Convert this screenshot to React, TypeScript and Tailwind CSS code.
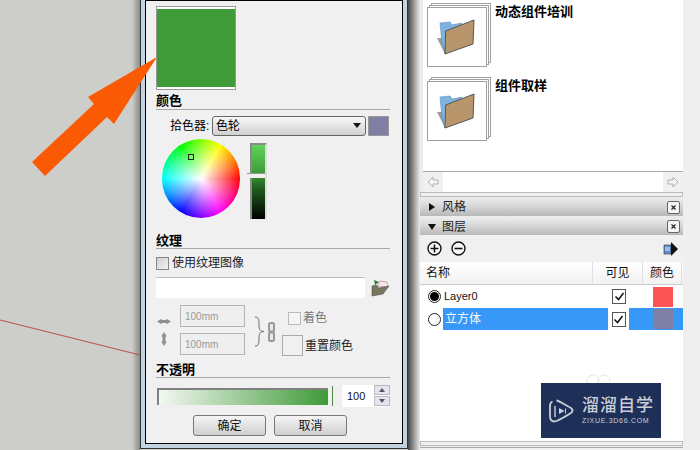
const cjk = "font-['Liberation_Sans','Noto_Sans_CJK_SC',sans-serif]";

function SectionTitle({ label, className = "" }: { label: string; className?: string }) {
  return (
    <div className={`border-b border-[#a8a8a8] text-[13px] leading-[15px] font-bold text-black ${className}`}>
      {label}
    </div>
  );
}

function Folder() {
  return (
    <svg width="40" height="40" viewBox="0 0 40 40">
      <path d="M1 21 L9 37 L9 21 Z" fill="#9c9c9c" />
      <path d="M4 6 L14 5 L16 8 L26 6 L9 37 L6 26 Z" fill="#7db3de" stroke="#5f8db5" strokeWidth="0.6" />
      <path d="M9.7 14 L38 3 L37 27 L9 37 Z" fill="#b8956a" stroke="#565656" strokeWidth="1" />
    </svg>
  );
}

function Thumb({ label }: { label: string }) {
  return (
    <div className="flex gap-1 h-[74px]">
      <div className="relative w-[64px] h-[64px] shrink-0">
        <div className="absolute left-[4px] top-0 w-[60px] h-[60px] border border-[#a0a0a0] bg-white" />
        <div className="absolute left-[2px] top-[2px] w-[60px] h-[60px] border border-[#a0a0a0] bg-white" />
        <div className="absolute left-0 top-[4px] w-[60px] h-[60px] border border-[#a0a0a0] bg-white pl-[8px] pt-[9px]">
          <Folder />
        </div>
      </div>
      <div className="text-[13px] leading-[16px] font-bold text-black mt-[1px]">{label}</div>
    </div>
  );
}

function PanelBar({ label, open, className = "h-[18px]" }: { label: string; open?: boolean; className?: string }) {
  return (
    <div className={`flex items-center shrink-0 bg-gradient-to-b from-[#ececec] via-[#d4d4d4] to-[#b8b8b8] pl-[8px] pr-[3px] text-[12px] text-[#222] ${className}`}>
      <svg width="8" height="8" viewBox="0 0 8 8" className="mr-[6px]">
        {open ? <path d="M0 1 H8 L4 7 Z" fill="#111" /> : <path d="M1 0 V8 L7 4 Z" fill="#111" />}
      </svg>
      <span className="flex-1">{label}</span>
      <span className="w-[13px] h-[13px] border border-[#666] rounded-[2px] bg-[#f4f4f4] flex items-center justify-center">
        <svg width="7" height="7" viewBox="0 0 7 7"><path d="M1.5 1.5 L5.5 5.5 M5.5 1.5 L1.5 5.5" stroke="#222" strokeWidth="1.2" /></svg>
      </span>
    </div>
  );
}

function LayerCheck() {
  return (
    <span className="w-[14px] h-[15px] border border-[#555] bg-white flex items-center justify-center shrink-0">
      <svg width="11" height="11" viewBox="0 0 11 11"><path d="M1.5 5.5 L4.5 8.5 L9.5 2" fill="none" stroke="#111" strokeWidth="1.5" /></svg>
    </span>
  );
}

function Button({ label }: { label: string }) {
  return (
    <div className="w-[73px] h-[21px] rounded-[3px] border border-[#777] bg-gradient-to-b from-[#f6f6f6] to-[#cfcfcf] flex items-center justify-center text-[12px] text-[#111]">
      {label}
    </div>
  );
}

function TexSize() {
  return (
    <div className="w-[65px] h-[22px] border border-[#b4b4b4] bg-[#efefef] flex items-center pl-[4px] text-[10px] text-[#999]">
      100mm
    </div>
  );
}

function ColorDialog() {
  return (
    <div className="w-[268px] h-[450px] shrink-0">
      <div className="h-[449px] border-x border-b border-[#333] bg-[#c3d3e0] px-[4px] pb-[4px]">
        <div className="h-full border-x border-y border-black bg-[#f0f0f0] pl-[10px] pr-[12px]">
          <div className="mt-[5px] w-[80px] h-[84px] border border-[#999] bg-white py-[2px]">
            <div className="h-full bg-[#3f9a38]" />
          </div>
          <SectionTitle label="颜色" className="mt-[3px] pb-[1px]" />
          <div className="mt-[5px] flex items-center h-[21px] text-[12px] text-black">
            <span className="ml-[14px] w-[42px]">拾色器:</span>
            <div className="w-[154px] h-[20px] rounded-[3px] border border-[#666] bg-gradient-to-b from-[#f8f8f8] to-[#d0d0d0] flex items-center justify-between pl-[3px] pr-[4px]">
              <span>色轮</span>
              <svg width="8" height="5" viewBox="0 0 8 5"><path d="M0 0 H8 L4 5 Z" fill="#111" /></svg>
            </div>
            <div className="ml-[2px] w-[21px] h-[20px] border border-[#999] bg-[#7f7fa5]" />
          </div>
          <div className="flex mt-[3px]">
            <div className="relative ml-[6px] w-[78px] h-[79px] rounded-full bg-[radial-gradient(circle,#ffffff_0%,#ffffff00_70%),conic-gradient(from_90deg,#ff0000,#ff00ff,#0000ff,#00ffff,#00ff00,#ffff00,#ff0000)]">
              <span className="absolute left-[26px] top-[15px] w-[6px] h-[6px] border border-[#222]" />
            </div>
            <div className="relative ml-[10px] mt-[4px] w-[17px] h-[76px] border-x-2 border-t-2 border-[#8a8a8a] border-r-[#dddddd]">
              <div className="h-full bg-[linear-gradient(#5fd45a_0%,#3f9a38_38%,#1f5a1c_60%,#000000_100%)]" />
              <span className="absolute -left-[5px] right-0 top-[28px] h-[5px] bg-[#f0f0f0] border-t border-[#999]" />
            </div>
          </div>
          <SectionTitle label="纹理" className="mt-[14px]" />
          <div className="mt-[7px] flex items-center h-[14px] text-[12px] text-[#222]">
            <span className="w-[13px] h-[13px] border border-[#888] bg-gradient-to-br from-[#cfcfcf] to-[#f4f4f4]" />
            <span className="ml-[3px]">使用纹理图像</span>
          </div>
          <div className="mt-[7px] flex items-center">
            <div className="w-[209px] h-[21px] shrink-0 bg-white rounded-[2px] border-t border-[#bbbbbb]" />
            <svg width="19" height="18" viewBox="0 0 19 18" className="ml-[6px] shrink-0">
              <path d="M6 7 L9 2 L16 3 L17 8 Z" fill="#f5e8e8" stroke="#b05060" strokeWidth="0.5" />
              <path d="M1 7 L1 17 L12 15 L18 7 L8 9 L5 6 Z" fill="#77775f" stroke="#555" strokeWidth="0.6" />
              <path d="M3 1 L8 3 L4 6 Z" fill="#2f7a3a" />
            </svg>
          </div>
          <div className="mt-[7px] flex">
            <div className="flex flex-col items-center w-[14px] ml-[1px] mt-[13px] gap-[7px]">
              <svg width="14" height="7" viewBox="0 0 14 7"><path d="M0 3.5 L4 1 L5 2 L9 2 L10 1 L14 3.5 L10 6 L9 5 L5 5 L4 6 Z" fill="#8f8f8f" /></svg>
              <svg width="6" height="14" viewBox="0 0 6 14"><path d="M3 0 L5.5 4 L4.5 5 L4.5 9 L5.5 10 L3 14 L0.5 10 L1.5 9 L1.5 5 L0.5 4 Z" fill="#8f8f8f" /></svg>
            </div>
            <div className="ml-[9px] flex flex-col gap-[6px]">
              <TexSize />
              <TexSize />
            </div>
            <svg width="11" height="31" viewBox="0 0 11 31" className="ml-[9px] mt-[11px]">
              <path d="M1 1 C5 1 5 4 5 9 C5 13 6 15.5 10 15.5 C6 15.5 5 18 5 22 C5 27 5 30 1 30" fill="none" stroke="#666" strokeWidth="1" />
            </svg>
            <svg width="7" height="20" viewBox="0 0 7 20" className="ml-[3px] mt-[17px]">
              <rect x="1" y="1" width="5" height="8.5" rx="1.5" fill="#e8e8e8" stroke="#999" strokeWidth="2" />
              <rect x="1" y="10.5" width="5" height="8.5" rx="1.5" fill="#e8e8e8" stroke="#999" strokeWidth="2" />
            </svg>
            <div className="ml-[7px] flex flex-col">
              <div className="ml-[6px] mt-[6px] flex items-center h-[14px] text-[12px] text-[#777]">
                <span className="w-[13px] h-[13px] border border-[#bbbbbb] bg-[#f4f4f4]" />
                <span className="ml-[2px]">着色</span>
              </div>
              <div className="mt-[10px] flex items-center text-[12px] text-[#222]">
                <span className="w-[21px] h-[21px] border border-[#aaaaaa]" />
                <span className="ml-[2px]">重置颜色</span>
              </div>
            </div>
          </div>
          <SectionTitle label="不透明" className="mt-[6px]" />
          <div className="mt-[7px] flex items-center h-[22px]">
            <div className="ml-[1px] w-[171px] h-[17px] border-t-2 border-l-2 border-[#808080] bg-[linear-gradient(90deg,#f4f8f2,#3f9a38)]" />
            <span className="ml-[4px] w-[1px] h-[20px] bg-[#4f8a4a]" />
            <div className="ml-[9px] w-[48px] h-[22px] bg-white flex items-center text-[11px] text-[#111] pl-[5px] relative">
              100
              <div className="absolute right-0 top-0 flex flex-col gap-[1px]">
                <span className="w-[16px] h-[10px] border border-[#bbbbbb] bg-[#e4e4ee] flex items-center justify-center">
                  <svg width="6" height="4" viewBox="0 0 6 4"><path d="M0 4 H6 L3 0 Z" fill="#556" /></svg>
                </span>
                <span className="w-[16px] h-[10px] border border-[#bbbbbb] bg-[#e4e4ee] flex items-center justify-center">
                  <svg width="6" height="4" viewBox="0 0 6 4"><path d="M0 0 H6 L3 4 Z" fill="#556" /></svg>
                </span>
              </div>
            </div>
          </div>
          <div className="mt-[8px] ml-[37px] flex gap-[8px]">
            <Button label="确定" />
            <Button label="取消" />
          </div>
        </div>
      </div>
    </div>
  );
}

function Watermark() {
  return (
    <div className="absolute left-[541px] top-[383px] w-[120px] h-[55px] bg-[#1f3058] flex items-center pl-[8px] text-[#c9ced9]">
      <svg width="25" height="24" viewBox="0 0 25 24" className="shrink-0">
        <path d="M3.5 2.5 C2 3 1 4.5 1 7 L1 17 C1 20.5 2.5 22.5 5.5 22.5 C8 22.5 20 15.5 22.5 13.5 C24 12 24 11 22.5 9.5 C20 7.5 10 2 7.5 1.5" fill="none" stroke="#c9ced9" strokeWidth="1.8" />
        <path d="M6 7 L6 18" fill="none" stroke="#c9ced9" strokeWidth="1.4" />
        <path d="M10 9 L15.5 12 L10 15 Z" fill="#c9ced9" />
        <path d="M16.5 9.5 L16.5 14.5" stroke="#c9ced9" strokeWidth="1" />
      </svg>
      <div className="ml-[8px] flex flex-col items-start">
        <span className="text-[17px] leading-[20px] font-medium tracking-[1px] whitespace-nowrap">溜溜自学</span>
        <span className="text-[7px] leading-[9px] tracking-[0.7px] whitespace-nowrap">ZIXUE.3D66.COM</span>
      </div>
    </div>
  );
}

function SidePanel() {
  return (
    <div className="w-[263px] shrink-0 h-[450px] flex flex-col bg-[#ececec]">
      <div className="h-[172px] ml-[3px] bg-white border-b border-[#aaaaaa] pl-[4px] pt-[3px]">
        <Thumb label="动态组件培训" />
        <Thumb label="组件取样" />
      </div>
      <div className="h-[20px] ml-[3px] bg-white flex justify-between items-center">
        <span className="w-[20px] h-full bg-[#f0f0f0] flex items-center justify-center">
          <svg width="12" height="12" viewBox="0 0 12 12"><path d="M1 6 L6 1 L6 4 L11 4 L11 8 L6 8 L6 11 Z" fill="#f4f4f4" stroke="#b0b0b0" /></svg>
        </span>
        <span className="w-[20px] h-full bg-[#f0f0f0] flex items-center justify-center">
          <svg width="12" height="12" viewBox="0 0 12 12"><path d="M11 6 L6 1 L6 4 L1 4 L1 8 L6 8 L6 11 Z" fill="#f4f4f4" stroke="#b0b0b0" /></svg>
        </span>
      </div>
      <div className="h-[5px] border border-[#bbbbbb] bg-[#f0f0f0] shrink-0" />
      <div className="h-[1px] shrink-0" />
      <PanelBar label="风格" />
      <div className="h-[2px] shrink-0" />
      <PanelBar label="图层" open className="h-[17px]" />
      <div className="h-[27px] shrink-0 bg-[#f0f0f0] flex items-center pl-[7px] pr-[5px] gap-[9px]">
        <svg width="15" height="15" viewBox="0 0 15 15"><circle cx="7.5" cy="7.5" r="6.5" fill="#fafafa" stroke="#111" strokeWidth="1.4" /><path d="M3.5 7.5 H11.5 M7.5 3.5 V11.5" stroke="#111" strokeWidth="1.6" /></svg>
        <svg width="15" height="15" viewBox="0 0 15 15"><circle cx="7.5" cy="7.5" r="6.5" fill="#fafafa" stroke="#111" strokeWidth="1.4" /><path d="M3.5 7.5 H11.5" stroke="#111" strokeWidth="1.6" /></svg>
        <svg width="15" height="14" viewBox="0 0 15 14" className="ml-auto">
          <rect x="1" y="3" width="7" height="9" fill="#5f8fd0" stroke="#333" strokeWidth="0.6" />
          <path d="M2 6 H7 M2 8 H7" stroke="#fff" strokeWidth="0.8" />
          <path d="M8 0 L15 7 L8 14 Z" fill="#111" />
        </svg>
      </div>
      <div className="h-[23px] shrink-0 bg-gradient-to-b from-white to-[#f2f2f2] border-b border-[#cccccc] flex items-center text-[12px] text-[#111]">
        <span className="w-[172px] pl-[6px]">名称</span>
        <span className="w-[50px] h-full flex items-center justify-center border-l border-[#e0e0e0]">可见</span>
        <span className="w-[40px] h-full flex items-center justify-center border-x border-[#e0e0e0]">颜色</span>
      </div>
      <div className="flex-1 bg-white">
        <div className="h-[23px] flex items-center text-[12px] text-[#111]">
          <span className="ml-[8px] w-[13px] h-[13px] rounded-full border border-[#222] flex items-center justify-center shrink-0">
            <span className="w-[9px] h-[9px] rounded-full bg-black" />
          </span>
          <span className="ml-[3px] w-[168px] text-[11px]">Layer0</span>
          <LayerCheck />
          <span className="ml-[27px] w-[20px] h-[20px] bg-[#fc5454]" />
        </div>
        <div className="h-[22px] flex items-center text-[12px]">
          <span className="ml-[8px] w-[13px] h-[13px] rounded-full border border-[#222] bg-white shrink-0" />
          <span className="ml-[2px] w-[165px] h-full bg-[#3898f8] text-white flex items-center pl-[2px]">立方体</span>
          <span className="w-[21px] h-full bg-white flex items-center justify-center"><LayerCheck /></span>
          <span className="flex-1 h-full bg-[#3898f8] flex items-center">
            <span className="ml-[24px] w-[20px] h-[20px] bg-[#7f7fa5]" />
          </span>
        </div>
      </div>
      <div className="h-[5px] border border-[#bbbbbb] bg-[#f0f0f0] shrink-0" />
      <div className="h-[3px] mt-[1px] border-t border-[#aaaaaa] bg-[#f0f0f0] shrink-0" />
    </div>
  );
}

export default function App() {
  return (
    <div className={`relative w-[700px] h-[450px] overflow-hidden flex bg-[#cdcdc9] ${cjk}`}>
      <div className="w-[140px] shrink-0 flex justify-end">
        <div className="w-[8px] bg-gradient-to-r from-[#cdcdc9] to-[#8a8a88]" />
      </div>
      <ColorDialog />
      <div className="w-[12px] shrink-0 bg-gradient-to-r from-[#4a4a4a] via-[#9a9a9a] to-[#ececec]" />
      <SidePanel />
      <div className="flex-1 bg-[#efefef]" />

      {/* annotations drawn on top of the screenshot */}
      <svg width="700" height="450" viewBox="0 0 700 450" className="absolute left-0 top-0 pointer-events-none">
        <path d="M0 320 L140 355" stroke="#b85050" strokeWidth="1" />
        <path d="M157 57 L88 97 L94 104 L32 162 L45 176 L107 117 L114 124 Z" fill="#fb5a05" />
        <circle cx="593" cy="381" r="6" fill="none" stroke="#e6e6e6" />
        <circle cx="604" cy="381" r="6" fill="none" stroke="#e6e6e6" />
      </svg>
      <Watermark />
    </div>
  );
}
